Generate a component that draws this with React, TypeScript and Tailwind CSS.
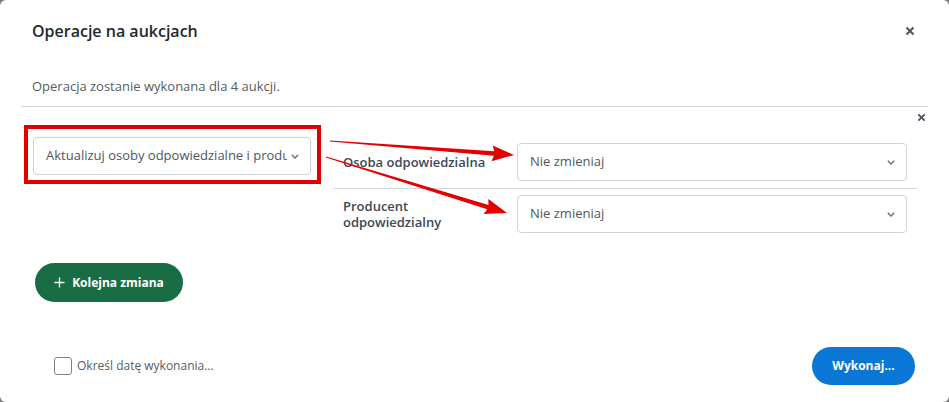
import React from "react";

function arrowPoints(x1: number, y1: number, x2: number, y2: number) {
  const dx = x2 - x1;
  const dy = y2 - y1;
  const len = Math.hypot(dx, dy);
  const ux = dx / len;
  const uy = dy / len;
  const nx = -uy;
  const ny = ux;
  const headLen = 20;
  const headW = 8;
  const bx = x2 - ux * headLen;
  const by = y2 - uy * headLen;
  const t = 0.5;
  const s = 2.2;
  const p = [
    [x1 + nx * t, y1 + ny * t],
    [bx + nx * s, by + ny * s],
    [bx + nx * headW + ux * -2, by + ny * headW + uy * -2],
    [x2, y2],
    [bx - nx * headW + ux * -2, by - ny * headW + uy * -2],
    [bx - nx * s, by - ny * s],
    [x1 - nx * t, y1 - ny * t],
  ];
  return p.map((q) => `${q[0].toFixed(1)},${q[1].toFixed(1)}`).join(" ");
}

function Chevron() {
  return (
    <svg width="8" height="5" viewBox="0 0 8 5" className="shrink-0">
      <polyline points="0.8,0.8 4,4 7.2,0.8" fill="none" stroke="#6b7583" strokeWidth="1.5" />
    </svg>
  );
}

function Select({ text, className }: { text: string; className?: string }) {
  return (
    <div
      className={
        "flex h-[38px] items-center justify-between gap-[4px] rounded-[4px] border border-[#cfd4da] bg-white pl-[12px] pr-[11px] " +
        (className ?? "")
      }
    >
      <span className="overflow-hidden whitespace-nowrap text-[13px] text-[#4f5660]">{text}</span>
      <Chevron />
    </div>
  );
}

function Cross({ size }: { size: number }) {
  return (
    <svg width={size} height={size} viewBox="0 0 10 10">
      <path d="M1.5 1.5 L8.5 8.5 M8.5 1.5 L1.5 8.5" stroke="#4a5260" strokeWidth="2" />
    </svg>
  );
}

export default function App() {
  return (
    <div className="relative h-[402px] w-[949px] bg-[#7a7a7a]" style={{ fontFamily: '"Open Sans", sans-serif' }}>
      <div className="flex h-full w-full flex-col rounded-[6px] bg-white">
        <div className="flex h-[62px] items-center justify-between pl-[32px] pr-[34px]">
          <h1 className="text-[16px] font-semibold text-[#222830]">Operacje na aukcjach</h1>
          <Cross size={10} />
        </div>

        <div className="mx-[21px] border-b border-[#d6d7dd] pb-[10px] pt-[14px]">
          <p className="pl-[11px] text-[13px] leading-[20px] text-[#565c64]">
            Operacja zostanie wykonana dla 4 aukcji.
          </p>
        </div>

        <div className="relative mx-[21px]">
          <div className="absolute right-[2px] top-[6px]">
            <Cross size={9} />
          </div>
          <div className="flex items-start pt-[18px]">
            <div className="ml-[3px] w-[297px] border-4 border-[#e10000] pb-[5px] pl-[5px] pr-[6px] pt-[8px]">
              <Select text="Aktualizuj osoby odpowiedzialne i producentów" />
            </div>
            <div className="ml-[13px] mt-[12px] w-[583px]">
              <div className="flex items-center border-b border-[#d6d7dd] pb-[7px] pl-[9px] pt-[6px]">
                <span className="w-[174px] text-[13px] font-semibold leading-[16px] text-[#3d4857]">
                  Osoba odpowiedzialna
                </span>
                <Select text="Nie zmieniaj" className="w-[390px]" />
              </div>
              <div className="flex items-center pb-[6px] pl-[9px] pt-[6px]">
                <span className="w-[174px] text-[13px] font-semibold leading-[16px] text-[#3d4857]">
                  Producent
                  <br />
                  odpowiedzialny
                </span>
                <Select text="Nie zmieniaj" className="w-[390px]" />
              </div>
            </div>
          </div>
          <div className="mt-[24px] pl-[14px]">
            <button className="flex h-[39px] w-[148px] items-center justify-center gap-[7px] rounded-full bg-[#186d45] text-[12px] font-bold text-white">
              <svg width="11" height="11" viewBox="0 0 11 11">
                <path d="M5.5 0.5 V10.5 M0.5 5.5 H10.5" stroke="white" strokeWidth="1.3" />
              </svg>
              Kolejna zmiana
            </button>
          </div>
        </div>

        <div className="mt-[45px] flex items-center justify-between pl-[54px] pr-[34px]">
          <label className="flex items-center gap-[5px]">
            <span className="h-[18px] w-[18px] rounded-[3px] border border-[#7d838c] bg-white" />
            <span className="text-[12px] text-[#565c64]">Określ datę wykonania...</span>
          </label>
          <button className="h-[38px] w-[103px] rounded-full bg-[#0a77d6] text-[12px] font-bold text-white">
            Wykonaj...
          </button>
        </div>
      </div>

      <svg className="pointer-events-none absolute left-0 top-0" width="949" height="402">
        <polygon points={arrowPoints(330, 141, 514, 155)} fill="#e20000" />
        <polygon points={arrowPoints(326, 157, 507, 213)} fill="#e20000" />
      </svg>
    </div>
  );
}
